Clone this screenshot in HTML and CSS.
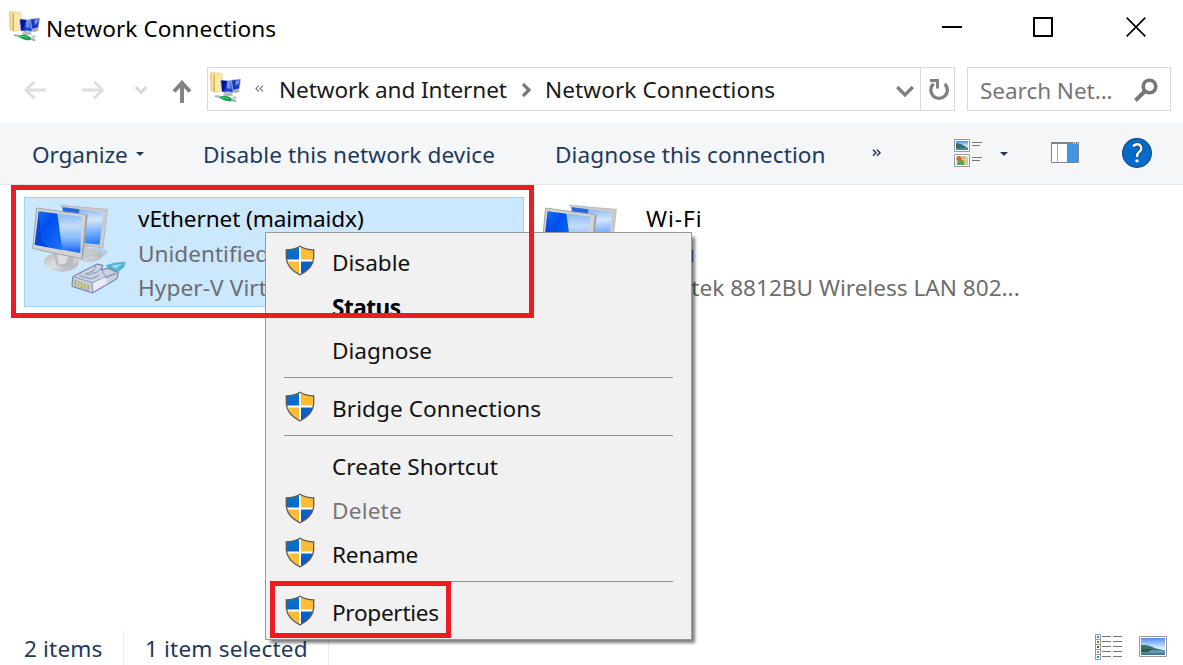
FILE: index.html
```html
<!DOCTYPE html>
<html lang="en">
<head>
<meta charset="utf-8">
<title>Network Connections</title>
<link rel="stylesheet" href="styles.css">
</head>
<body>
<svg class="defs" width="0" height="0" aria-hidden="true">
  <defs>
    <linearGradient id="blue" x1="0" y1="0" x2="1" y2="1"><stop offset="0" stop-color="#1f72ee"/><stop offset=".4" stop-color="#0050ef"/><stop offset="1" stop-color="#1c74fb"/></linearGradient>
    <linearGradient id="glare" x1="0" y1="0" x2="0" y2="1"><stop offset="0" stop-color="#7eb0f3"/><stop offset=".35" stop-color="#c3dcf8"/><stop offset=".65" stop-color="#8abaf9"/><stop offset="1" stop-color="#0e62f8"/></linearGradient>
    <linearGradient id="glare2" x1="0" y1="0" x2="0.1" y2="1"><stop offset="0" stop-color="#6fa6ef"/><stop offset=".4" stop-color="#d5e6fa"/><stop offset="1" stop-color="#2f84ff"/></linearGradient>
    <linearGradient id="stand" x1="0" y1="0" x2="1" y2="1"><stop offset="0" stop-color="#b5b9bd"/><stop offset=".5" stop-color="#dedfe0"/><stop offset="1" stop-color="#a5abb1"/></linearGradient>
    <linearGradient id="folder" x1="0" y1="0" x2="1" y2="0"><stop offset="0" stop-color="#e9ca70"/><stop offset=".3" stop-color="#fbeeb8"/><stop offset="1" stop-color="#eed583"/></linearGradient>
    <linearGradient id="screen" x1="0" y1="0" x2="1" y2="0"><stop offset="0" stop-color="#0a1fa0"/><stop offset=".4" stop-color="#0d31d2"/><stop offset=".6" stop-color="#7fa4ee"/><stop offset="1" stop-color="#1c40cc"/></linearGradient>
    <linearGradient id="sky" x1="0" y1="0" x2="0" y2="1"><stop offset="0" stop-color="#4e8ff2"/><stop offset=".55" stop-color="#cfe9fb"/><stop offset="1" stop-color="#d9effa"/></linearGradient>
    <linearGradient id="sea" x1="0" y1="0" x2="0" y2="1"><stop offset="0" stop-color="#83b1cc"/><stop offset="1" stop-color="#2c6c9b"/></linearGradient>
    <linearGradient id="shBlue" x1="0" y1="0" x2="0" y2="1"><stop offset="0" stop-color="#0878d4"/><stop offset="1" stop-color="#0a55bd"/></linearGradient>
    <symbol id="netfolder" viewBox="24 30 102 99">
      <path d="M28 36l10-3 26 6v50l-20 6-14-6z" fill="url(#folder)" stroke="#dcc27c" stroke-width="1.500"/>
      <path d="M38 36l4 5v53l-5-3z" fill="#d2b256"/><path d="M43 42l20-3v48l-18 6z" fill="#f9e9ac"/>
      <path d="M99 80l12 0 5 12-15 4-7-4z" fill="#a8abb1"/>
      <path d="M86 58l33-4-4 29-22 6z" fill="#1738bd" stroke="#d3d5da" stroke-width="2"/>
      <path d="M104 59l12-2-3 10-9 9z" fill="#7297ec"/>
      <path d="M76 90l16 1 3 13-21 2-9-5z" fill="#b9babd"/>
      <path d="M59 57l32 2 6 36-34-2z" fill="url(#screen)" stroke="#d0d3da" stroke-width="2"/>
      <path d="M61 59l18 1-11 31h-5z" fill="#0711a0"/><path d="M65 88l13 1 16 4-1-8-14-3z" fill="#1740cc"/>
      <path d="M42 105l15 2M90 116l15 5" stroke="#93a3a6" stroke-width="6"/>
      <path d="M43 104l14 1M91 114l12 4" stroke="#e4e9e9" stroke-width="2"/>
      <path d="M53 110q7-7 24-5l14 6v10q-20 0-36-11z" fill="#139b45"/><path d="M60 109l15 1 8 5" stroke="#5bd781" stroke-width="3" fill="none"/>
      <path d="M92 114l6-7 8 1-6 10z" fill="#ced5d7" stroke="#95a3a8" stroke-width="1.500"/>
    </symbol>
    <symbol id="monitors" viewBox="90 60 300 291">
      <ellipse cx="265" cy="225" rx="43" ry="21" fill="url(#stand)"/>
      <ellipse cx="294" cy="217" rx="29" ry="13" fill="#889cb1" opacity=".3"/>
      <path d="M224 173l38 20 12 41-36 7z" fill="#c8cbce"/>
      <path d="M182 75q65 7 140 13l-13 116q-28-4-61-7z" fill="#c9cbcd" stroke="#a9adb1" stroke-width="2"/>
      <path d="M188 82l122 15-11 97-49-5z" fill="url(#glare2)"/>
      <path d="M188 82l50 6-1 18-49-5z" fill="#2269dc"/>
      <ellipse cx="184" cy="246" rx="53" ry="29" fill="url(#stand)"/>
      <path d="M160 210l62 14-4 36q-25 7-49-5z" fill="#b9bcc0"/>
      <path d="M170 218l36 8-9 24-20 5z" fill="#dededd"/>
      <path d="M110 84q78 12 151 20l-14 132Q168 222 98 205z" fill="#d2d3d3" stroke="#a3a7ab" stroke-width="3"/>
      <path d="M257 105l6 1-14 128-5-1z" fill="#a3a6a9"/>
      <path d="M116 94l129 16-4 109-137-25z" fill="url(#glare)"/>
      <path d="M116 94l56 7 15 109-83-16z" fill="url(#blue)"/>
      <path d="M116 100l8 79 22 23-40-8z" fill="#073eca" opacity=".65"/>
    </symbol>
    <symbol id="shield" viewBox="0 0 30 31">
      <clipPath id="shc"><path d="M15 1.2Q9.500 4.800 1.300 4.800V13Q2 23.500 15 29.800 28 23.500 28.700 13V4.800Q20.500 4.800 15 1.200z"/></clipPath>
      <g clip-path="url(#shc)"><path d="M0 0h30v31H0z" fill="#fff"/><path d="M0 0h14v14.500H0zM16 16.500h14V31H16z" fill="url(#shBlue)"/><path d="M16 0h14v14.500H16zM0 16.500h14V31H0z" fill="#ffbd36"/></g>
      <path d="M15 1.200Q9.500 4.800 1.300 4.800V13Q2 23.500 15 29.800 28 23.500 28.700 13V4.800Q20.500 4.800 15 1.200z" fill="none" stroke="#595b5c" stroke-width="1.300"/>
    </symbol>
  </defs>
</svg>

<div class="window">
  <header class="titlebar">
    <svg class="app-icon" width="34" height="33"><use href="#netfolder"/></svg>
    <h1 class="title">Network Connections</h1>
    <div class="controls">
      <svg width="20" height="20" viewBox="0 0 20 20"><path d="M0 10h20" stroke="#000" stroke-width="2"/></svg>
      <svg width="20" height="20" viewBox="0 0 20 20"><path d="M1 1h18v18H1z" fill="none" stroke="#000" stroke-width="2"/></svg>
      <svg width="20" height="20" viewBox="0 0 20 20"><path d="M.7.7l18.600 18.600M19.300.7L.7 19.300" stroke="#000" stroke-width="1.700"/></svg>
    </div>
  </header>

  <nav class="navbar">
    <div class="arrows">
      <svg width="184" height="44" viewBox="12 67 184 44" fill="none" stroke-width="3">
        <path d="M46 90H26M34.500 81.500L26 90l8.500 8.500M82 90h20M94 81.500l8.500 8.500L94 98.500" stroke="#dedede"/>
        <path d="M135.500 87l5.500 5.500 5.500-5.500" stroke="#d8d8d8"/>
        <path d="M182 103V83M174 91.500l8-8.500 8 8.500" stroke="#838383" stroke-width="4"/>
      </svg>
    </div>
    <div class="address">
      <svg class="address-icon" width="34" height="33"><use href="#netfolder"/></svg>
      <svg class="chevrons" width="9" height="8" viewBox="0 0 9 8"><path d="M4 .7L1 3.700l3 3M8 .7L5 3.700l3 3" fill="none" stroke="#777" stroke-width="1.200"/></svg>
      <span class="crumb crumb-parent">Network and Internet</span>
      <svg class="crumb-sep" width="9" height="14" viewBox="0 0 9 14"><path d="M1 1l6 6-6 6" fill="none" stroke="#767676" stroke-width="3.200"/></svg>
      <span class="crumb crumb-here">Network Connections</span>
      <svg class="drop" width="18" height="13" viewBox="0 0 18 13"><path d="M1.200 2L9 9.800 16.800 2" fill="none" stroke="#808080" stroke-width="3.300"/></svg>
      <div class="refresh">
        <svg width="22" height="22" viewBox="0 0 22 22"><path d="M5.700 4.800A8.300 8.300 0 1 0 16.600 4.900" fill="none" stroke="#808080" stroke-width="3.300"/><path d="M2 1.500h7.500v8" fill="none" stroke="#808080" stroke-width="3"/></svg>
      </div>
    </div>
    <div class="search">
      <span>Search Net...</span>
      <svg width="24" height="24" viewBox="0 0 24 24"><circle cx="15.500" cy="8.500" r="6.300" fill="none" stroke="#777" stroke-width="3.600"/><path d="M11 13L1.500 22.500" stroke="#777" stroke-width="3.900"/></svg>
    </div>
  </nav>

  <div class="toolbar">
    <span class="tool organize">Organize</span>
    <svg class="tri" width="8" height="4" viewBox="0 0 8 4"><path d="M0 0h8L4 4z" fill="#1e395b"/></svg>
    <span class="tool disable">Disable this network device</span>
    <span class="tool diagnose">Diagnose this connection</span>
    <svg class="more" width="9" height="8" viewBox="0 0 9 8"><path d="M1 .7l3 3-3 3M5 .7l3 3-3 3" fill="none" stroke="#1e395b" stroke-width="1.500"/></svg>
    <svg class="view" width="29" height="28" viewBox="0 0 29 28">
      <path d="M.5.5h15v12H.5zM.5 15.500h15v12H.5z" fill="#fff" stroke="#999"/>
      <path d="M2 2h12v9H2z" fill="url(#sky)"/><path d="M2 4l5 1 7 4v1H2z" fill="#376e62"/><path d="M2 9h12v2H2z" fill="#478ab1"/>
      <path d="M2 17h12v9H2z" fill="#c8dcf5"/><path d="M8 22l6-3v7H7z" fill="#d1cc82"/><path d="M3 26q0-5 4-6 4 1 3 6z" fill="#58a742"/><circle cx="5" cy="19.500" r="2.500" fill="#e26423"/><circle cx="10" cy="18.500" r="1.500" fill="#e5a827"/>
      <path d="M18 3.500h10M18 6.500h8M18 18.500h10M18 21.500h8" stroke="#777"/>
    </svg>
    <svg class="tri tri-view" width="8" height="4" viewBox="0 0 8 4"><path d="M0 0h8L4 4z" fill="#1e395b"/></svg>
    <svg class="pane" width="28" height="21" viewBox="0 0 28 21"><path d="M.5.500h27v20H.5z" fill="#fff" stroke="#848589"/><path d="M0 0h28v2H0z" fill="#848589"/><path d="M6.500 2v18" stroke="#aaa"/><path d="M16 2h11v18H16z" fill="#3f97e2"/><path d="M22 1h1m1 0h1m1 0h1" stroke="#fff"/></svg>
    <svg class="help" width="30" height="30" viewBox="0 0 30 30"><circle cx="15" cy="15" r="14.400" fill="#046ac9" stroke="#174d82" stroke-width="1.200"/><path d="M11 8.200Q15 5 18 7.300C21 10.500 18.500 13 16.500 14.700 15 16 15 17 15 19" fill="none" stroke="#174d82" stroke-width="4"/><path d="M11 8.200Q15 5 18 7.300C21 10.500 18.500 13 16.500 14.700 15 16 15 17 15 19" fill="none" stroke="#fff" stroke-width="2.400"/><path d="M13.500 21.500h3v2.700h-3z" fill="#fff"/></svg>
  </div>

  <main class="content">
    <article class="item selected">
      <div class="item-icon">
        <svg width="100" height="97"><use href="#monitors"/></svg>
        <svg class="plug" width="100" height="97" viewBox="90 60 300 291">
          <path d="M318 256l24-8 35-3-4 16-17 14-25 4z" fill="#53b4d2"/><path d="M333 257l32-6-17 15z" fill="#9bdcec"/>
          <path d="M218 290l73-38 18 4-6 13 21-4 31 13-4 18-73 43-62-20z" fill="#c9d1e3" stroke="#6c7795" stroke-width="3"/>
          <path d="M222 291l54 17 72-29M276 308l2 29M255 282l25-9 8-18M260 285l32-9 12-11M307 270l10 23 31-12M237 287l37 10 23-11" fill="none" stroke="#828ba8" stroke-width="2.500"/>
          <path d="M279 309l34-16 7 3v15l-40 22z" fill="#e9edf5"/>
          <path d="M222 298l46 16v18l-45-15z" fill="#a7adb5"/><path d="M231 303v15M240 306v15M250 309v15M260 312v15" stroke="#d0ce71" stroke-width="6"/>
        </svg>
      </div>
      <div class="item-text"><p class="name n1">vEthernet (maimaidx)</p><p>Unidentified</p><p class="device">Hyper-V Virt</p></div>
    </article>
    <article class="item">
      <div class="item-icon"><svg width="100" height="97"><use href="#monitors"/></svg></div>
      <div class="item-text"><p class="name n2">Wi-Fi</p><p class="ssid">maiu</p><p class="adapter">Realtek 8812BU Wireless LAN 802...</p></div>
    </article>
  </main>

  <footer class="statusbar">
    <span class="count">2 items</span><span class="chosen">1 item selected</span>
    <div class="view-modes">
      <svg width="28" height="26" viewBox="0 0 28 26"><path d="M.5.500h5v25h-5zM0 5.500h6M0 10.500h6M0 15.500h6M0 20.500h6" fill="#fff" stroke="#999"/><path d="M2 2h2v2H2z" fill="#4880bd"/><path d="M2 7h2v2H2z" fill="#76833b"/><path d="M2 12h2v2H2z" fill="#b73620"/><path d="M2 17h2v2H2z" fill="#77a86d"/><path d="M2 22h2v2H2z" fill="#3189ac"/><path d="M7 2.500h9m2 0h9M7 7.500h9m2 0h9M7 12.500h9m2 0h9M7 17.500h9m2 0h9M7 22.500h9m2 0h9" stroke="#777"/></svg>
      <svg width="28" height="21" viewBox="0 0 28 21"><path d="M.5.500h27v20H.5z" fill="#fff" stroke="#999"/><path d="M2 2h24v17H2z" fill="url(#sky)"/><path d="M2 14h24v5H2z" fill="url(#sea)"/><path d="M2 9l5 0 5 1.500 5 2 9 2H2z" fill="#397463"/><path d="M2 13h12l-5 3H2z" fill="#2c5b5b"/></svg>
    </div>
  </footer>

  <div class="menu">
    <div class="entry"><svg width="30" height="31"><use href="#shield"/></svg><span>Disable</span></div>
    <div class="entry default"><span>Status</span></div>
    <div class="entry"><span>Diagnose</span></div>
    <hr>
    <div class="entry"><svg width="30" height="31"><use href="#shield"/></svg><span class="bridge">Bridge Connections</span></div>
    <hr>
    <div class="entry"><span>Create Shortcut</span></div>
    <div class="entry off"><svg width="30" height="31"><use href="#shield"/></svg><span class="delete">Delete</span></div>
    <div class="entry"><svg width="30" height="31"><use href="#shield"/></svg><span class="rename">Rename</span></div>
    <hr>
    <div class="entry"><svg width="30" height="31"><use href="#shield"/></svg><span class="properties">Properties</span></div>
  </div>
  <div class="mark mark-item"></div>
  <div class="mark mark-properties"></div>
</div>
</body>
</html>
```
FILE: styles.css
```css
* { box-sizing: border-box; }
body { margin: 0; background: #fff; font: 22.6px/34px "Noto Sans", "Open Sans", sans-serif; color: #000; }
svg { display: block; flex: none; }
h1, p { margin: 0; font: inherit; }
span, p, h1 { white-space: nowrap; }
.defs { position: absolute; }
.window { position: relative; width: 1183px; height: 665px; overflow: hidden; display: flex; flex-direction: column; }

.titlebar { height: 67px; padding: 10px 37px 0 8px; display: flex; align-items: flex-start; }
.title { margin: 2px 0 0 4px; letter-spacing: .08px; }
.controls { margin: 7px 0 0 auto; display: flex; gap: 71px; }
.controls svg:last-child { margin-left: 2px; }

.navbar { height: 44px; padding-left: 12px; display: flex; }
.arrows { width: 195px; }
.address { width: 748px; border: 1px solid #d9d9d9; display: flex; align-items: center; color: #1a1a1a; }
.address-icon { margin: -3px 0 0 1px; }
.chevrons { margin-left: 12px; }
.crumb { padding-top: 2px; }
.crumb-parent { margin-left: 15px; width: 228px; letter-spacing: -.1px; }
.crumb-here { letter-spacing: .08px; }
.crumb-sep { margin: 2px 14px 0 15px; }
.drop { margin: 4px 6px 0 auto; }
.refresh { width: 34px; height: 42px; padding: 2px 0 0 2px; border-left: 1px solid #d9d9d9; display: grid; place-items: center; }
.search { width: 204px; margin-left: 12px; padding: 2px 12px 0 12px; border: 1px solid #d9d9d9; display: flex; align-items: center; justify-content: space-between; color: #767676; letter-spacing: -.08px; }
.search span { padding-top: 2px; }

.toolbar { height: 62px; margin-top: 12px; padding-left: 32px; display: flex; align-items: center; background: #f4f6f8; border-bottom: 1px solid #e4e6e8; color: #1e395b; }
.tool { padding-top: 2px; }
.organize { width: 96px; letter-spacing: -.1px; }
.tri { margin-left: 8px; }
.disable { width: 292px; margin-left: 59px; letter-spacing: .1px; }
.diagnose { width: 271px; margin-left: 60px; letter-spacing: .1px; }
.more { margin: -2px 0 0 46px; }
.view { margin: -2px 0 0 73px; }
.tri-view { margin-left: 17px; }
.pane { margin: -2px 0 0 43px; }
.help { margin: -2px 0 0 43px; }

.content { flex: 1; padding: 12px 24px; display: flex; gap: 9px; align-items: flex-start; }
.item { width: 500px; height: 110px; padding: 2px 0 0 5px; display: flex; border: 1px solid transparent; color: #6d6d6d; }
.selected { background: #cce8ff; border-color: #99d1ff; }
.item-icon { display: grid; width: 108px; }
.item + .item .item-icon { width: 107px; }
.item-icon svg { grid-area: 1 / 1; }
.item-text { line-height: 34.500px; margin-top: 2px; }
.name { color: #000; }
.n1 { letter-spacing: -.1px; }
.n2 { letter-spacing: 1px; }
.device { letter-spacing: .1px; }
.ssid { margin-left: -5px; color: #333; }

.statusbar { height: 35px; padding: 0 0 0 24px; display: flex; color: #1e395b; line-height: 38px; letter-spacing: .16px; }
.count { width: 100px; border-right: 1px solid #ececec; }
.chosen { width: 205px; padding-left: 21px; border-right: 1px solid #ececec; }
.view-modes { margin: 4px 16px 0 auto; display: flex; gap: 16px; }
.view-modes svg:last-child { margin-top: 2px; }

.menu { position: absolute; left: 265px; top: 232px; width: 427px; height: 408px; padding-top: 7px; background: #f1f1f1; border: 1px solid #999; box-shadow: 4px 4px 3px -1px rgba(0,0,0,.5); color: #111; }
.entry { height: 44px; display: grid; grid-template-columns: 30px 1fr; column-gap: 17px; padding-left: 19px; align-items: center; }
.entry svg { margin-top: -3px; }
.entry span { grid-column: 2; padding-top: 2px; }
.default { color: #000; font-weight: 700; letter-spacing: -.5px; }
.default span { padding-top: 3px; }
.off { color: #767676; }
.bridge { letter-spacing: .06px; }
.delete { letter-spacing: .2px; }
.rename { letter-spacing: -.2px; }
.properties { letter-spacing: -.3px; }
.menu hr { height: 1px; margin: 5px 18px 8px; border: 0; background: #919191; }

.mark { position: absolute; border: 5px solid #ed1c24; }
.mark-item { left: 11px; top: 185px; width: 523px; height: 133px; }
.mark-properties { left: 270px; top: 581px; width: 181px; height: 57px; }
```
